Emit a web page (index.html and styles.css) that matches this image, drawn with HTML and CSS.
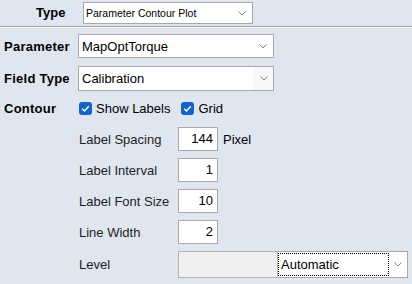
FILE: index.html
```html
<!DOCTYPE html>
<html lang="en">
<head>
    <meta charset="UTF-8">
    <title>Contour Settings</title>
    <link rel="stylesheet" href="styles.css">
</head>
<body>
    <div class="header">
        <span class="type-label">Type</span>
        <div class="combo combo-small">
            <span class="combo-text">Parameter Contour Plot</span>
            <svg class="chevron" width="8" height="5" viewBox="0 0 8 5"><path d="M0.5 0.5 L4 4 L7.5 0.5" /></svg>
        </div>
    </div>

    <div class="form">
        <div class="row">
            <span class="main-label">Parameter</span>
            <div class="combo combo-wide">
                <span class="combo-text">MapOptTorque</span>
                <svg class="chevron" width="8" height="5" viewBox="0 0 8 5"><path d="M0.5 0.5 L4 4 L7.5 0.5" /></svg>
            </div>
        </div>
        <div class="row row-field">
            <span class="main-label">Field Type</span>
            <div class="combo combo-wide">
                <span class="combo-text">Calibration</span>
                <span class="combo-btn">
                    <svg class="chevron" width="8" height="5" viewBox="0 0 8 5"><path d="M0.5 0.5 L4 4 L7.5 0.5" /></svg>
                </span>
            </div>
        </div>
        <div class="row row-contour">
            <span class="main-label">Contour</span>
            <label class="check">
                <span class="box"><svg width="13" height="13" viewBox="0 0 13 13"><path d="M3.2 6.8 L5.4 9 L9.8 4.2" /></svg></span>
                Show Labels
            </label>
            <label class="check check-grid">
                <span class="box"><svg width="13" height="13" viewBox="0 0 13 13"><path d="M3.2 6.8 L5.4 9 L9.8 4.2" /></svg></span>
                Grid
            </label>
        </div>

        <div class="sub">
            <div class="sub-row">
                <span class="sub-label">Label Spacing</span>
                <div class="num">144</div>
                <span class="unit">Pixel</span>
            </div>
            <div class="sub-row">
                <span class="sub-label">Label Interval</span>
                <div class="num">1</div>
            </div>
            <div class="sub-row">
                <span class="sub-label">Label Font Size</span>
                <div class="num">10</div>
            </div>
            <div class="sub-row">
                <span class="sub-label">Line Width</span>
                <div class="num">2</div>
            </div>
            <div class="sub-row sub-level">
                <span class="sub-label">Level</span>
                <div class="level-box"></div>
                <div class="combo combo-level">
                    <span class="combo-text focus">Automatic</span>
                    <svg class="chevron" width="8" height="5" viewBox="0 0 8 5"><path d="M0.5 0.5 L4 4 L7.5 0.5" /></svg>
                </div>
            </div>
        </div>
    </div>
</body>
</html>
```

FILE: styles.css
```css
body {
    margin: 0;
    background-color: #dfe6f0;
    font-family: 'Liberation Sans', Arial, sans-serif;
    font-size: 13px;
    color: #1e1e1e;
}
.header {
    height: 27px;
    display: flex;
    align-items: flex-start;
    padding-top: 2px;
    box-sizing: border-box;
    border-bottom: 1px solid #a3a3a3;
    box-shadow: 0 1px 0 #ffffff;
}
.type-label {
    margin-left: 36px;
    width: 47px;
    line-height: 22px;
    font-weight: bold;
    color: #000;
}
.combo {
    display: flex;
    align-items: center;
    background-color: #fff;
    border: 1px solid #a8a8a8;
    box-sizing: border-box;
}
.combo-text {
    flex: 1;
    padding-left: 3px;
    color: #000;
    white-space: nowrap;
}
.chevron {
    margin-right: 6px;
}
.chevron path {
    fill: none;
    stroke: #808080;
    stroke-width: 1;
}
.combo-small {
    width: 170px;
    height: 22px;
}
.combo-small .combo-text {
    font-size: 10.5px;
    padding-left: 2px;
}
.form {
    padding-top: 7px;
}
.row {
    display: flex;
    align-items: center;
    height: 24px;
}
.row-field {
    margin-top: 8px;
    height: 25px;
}
.row-contour {
    margin-top: 5px;
}
.main-label {
    width: 74px;
    padding-left: 4px;
    font-weight: bold;
    letter-spacing: 0.25px;
    color: #000;
}
.combo-wide {
    width: 196px;
    height: 100%;
}
.combo-btn {
    display: flex;
    align-items: center;
    height: 100%;
    padding-left: 7px;
    background-color: #f8f8f8;
}
.combo-btn .chevron {
    margin-right: 5px;
}
.check {
    display: flex;
    align-items: center;
    gap: 4px;
    margin-left: 1px;
    color: #000;
}
.check-grid {
    margin-left: 11px;
}
.box {
    width: 13px;
    height: 13px;
    border-radius: 3px;
    background-color: #1464c8;
    display: flex;
}
.box path {
    fill: none;
    stroke: #fff;
    stroke-width: 1.4;
}
.sub {
    margin-top: 7px;
    padding-left: 79px;
    display: flex;
    flex-direction: column;
    gap: 7px;
}
.sub-row {
    display: flex;
    align-items: center;
    height: 24px;
}
.sub-label {
    width: 99px;
    color: #1e1e1e;
}
.num {
    width: 40px;
    height: 24px;
    box-sizing: border-box;
    border: 1px solid #a8a8a8;
    background-color: #fff;
    text-align: right;
    padding-right: 4px;
    line-height: 22px;
    color: #000;
}
.unit {
    margin-left: 5px;
    color: #000;
}
.sub-level {
    height: 27px;
}
.level-box {
    width: 100px;
    height: 27px;
    box-sizing: border-box;
    border: 1px solid #b4b4b4;
    background-color: #f0f0f0;
}
.combo-level {
    width: 130px;
    height: 27px;
    border-left: none;
    padding: 1px 0;
}
.combo-level .combo-text.focus {
    align-self: stretch;
    display: flex;
    align-items: center;
    border: 1px dotted #000;
    padding-left: 2px;
    margin-right: 5px;
}
.combo-level .chevron {
    margin-right: 5px;
}
```
